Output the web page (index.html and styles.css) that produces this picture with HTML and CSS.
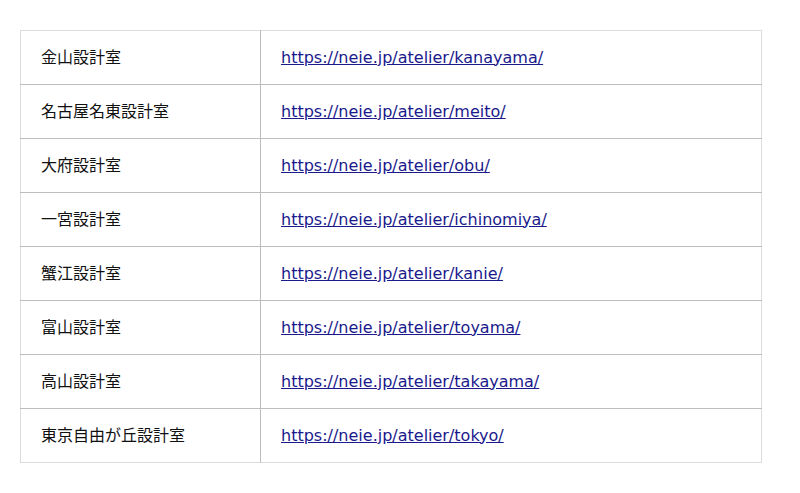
FILE: index.html
```html
<!DOCTYPE html>
<html lang="ja">
<head>
<meta charset="utf-8">
<link rel="stylesheet" href="styles.css">
</head>
<body>
<div class="wrap">
<table class="atelier">
<tbody>
<tr><td class="name">金山設計室</td><td class="url"><a href="#">https://neie.jp/atelier/kanayama/</a></td></tr>
<tr><td class="name">名古屋名東設計室</td><td class="url"><a href="#">https://neie.jp/atelier/meito/</a></td></tr>
<tr><td class="name">大府設計室</td><td class="url"><a href="#">https://neie.jp/atelier/obu/</a></td></tr>
<tr><td class="name">一宮設計室</td><td class="url"><a href="#">https://neie.jp/atelier/ichinomiya/</a></td></tr>
<tr><td class="name">蟹江設計室</td><td class="url"><a href="#">https://neie.jp/atelier/kanie/</a></td></tr>
<tr><td class="name">富山設計室</td><td class="url"><a href="#">https://neie.jp/atelier/toyama/</a></td></tr>
<tr><td class="name">高山設計室</td><td class="url"><a href="#">https://neie.jp/atelier/takayama/</a></td></tr>
<tr><td class="name">東京自由が丘設計室</td><td class="url"><a href="#">https://neie.jp/atelier/tokyo/</a></td></tr>
</tbody>
</table>
</div>
</body>
</html>
```

FILE: styles.css
```css
html, body {
  margin: 0;
  padding: 0;
  background: #fff;
}
body {
  font-family: "DejaVu Sans", "Noto Sans CJK JP", sans-serif;
  font-size: 16px;
  color: #111;
}
.wrap {
  padding: 30px 38px 0 20px;
}
.atelier {
  width: 742px;
  border-collapse: collapse;
  border: 1px solid #dcdcdc;
}
.atelier td {
  height: 54px;
  padding: 0 20px;
  border-top: 1px solid #bdbdbd;
  vertical-align: middle;
  line-height: 20px;
  box-sizing: border-box;
}
.atelier tr:first-child td {
  border-top: 1px solid #dcdcdc;
}
.atelier td.name {
  width: 240px;
  border-right: 1px solid #bdbdbd;
}
.atelier a {
  color: #1a1a8c;
  text-decoration: underline;
}
```
